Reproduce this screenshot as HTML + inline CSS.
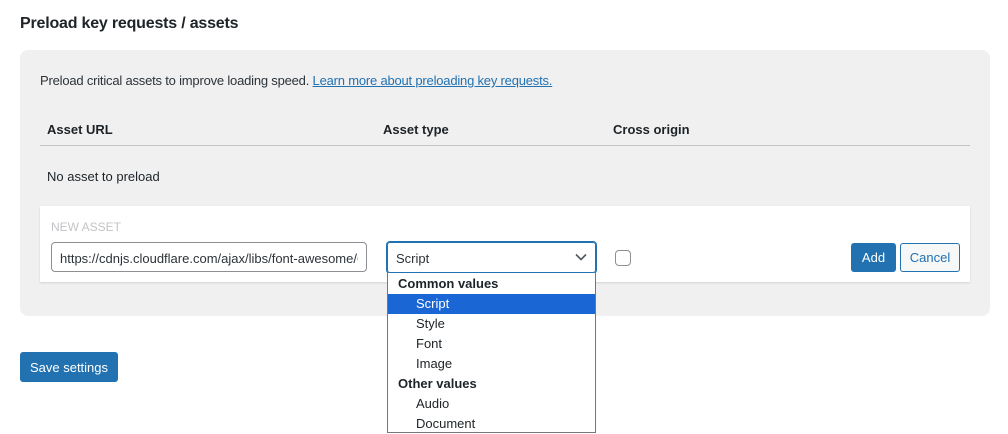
<!DOCTYPE html>
<html><head><style>
*{box-sizing:border-box;margin:0;padding:0}
body{width:1008px;height:428px;overflow:hidden;background:#fff;font-family:"Liberation Sans",sans-serif;color:#1d2327;position:relative;font-size:13px}
.a{position:absolute;white-space:nowrap}
</style></head><body>
<div class="a" style="left:20px;top:15px;font-size:16px;font-weight:600;color:#1d2327;letter-spacing:-0.2px">Preload key requests / assets</div>
<div class="a" style="left:20px;top:50px;width:970px;height:266px;background:#f0f0f1;border-radius:8px"></div>
<div class="a" style="left:40px;top:73px;color:#2c3338;letter-spacing:-0.2px">Preload critical assets to improve loading speed. <span style="color:#2271b1;text-decoration:underline">Learn more about preloading key requests.</span></div>
<div class="a" style="left:47px;top:122px;font-weight:bold">Asset URL</div>
<div class="a" style="left:383px;top:122px;font-weight:bold">Asset type</div>
<div class="a" style="left:613px;top:122px;font-weight:bold">Cross origin</div>
<div class="a" style="left:40px;top:145px;width:930px;height:1px;background:#c3c4c7"></div>
<div class="a" style="left:47px;top:169px">No asset to preload</div>
<div class="a" style="left:40px;top:206px;width:930px;height:76px;background:#fff;box-shadow:0 1px 2px rgba(0,0,0,.12)"></div>
<div class="a" style="left:51px;top:220px;font-size:12px;color:#c3c4c7">NEW ASSET</div>
<div class="a" style="left:51px;top:242px;width:316px;height:30px;border:1px solid #8c8f94;border-radius:4px;padding:8px 8px;color:#2c3338"><div style="width:298px;overflow:hidden">https://cdnjs.cloudflare.com/ajax/libs/font-awesome/6.0.0</div></div>
<div class="a" style="left:387px;top:242px;width:209px;height:31px;border:1px solid #2271b1;box-shadow:0 0 0 1px #2271b1;border-radius:3px;padding:8px 8px;color:#2c3338">Script
<svg style="position:absolute;right:8px;top:10px" width="12" height="8" viewBox="0 0 12 8"><path d="M1 1.5l5 5 5-5" fill="none" stroke="#50575e" stroke-width="1.6"/></svg></div>
<div class="a" style="left:615px;top:250px;width:16px;height:16px;border:1px solid #8c8f94;border-radius:4px"></div>
<div class="a" style="left:851px;top:243px;width:45px;height:29px;background:#2271b1;border-radius:3px;color:#fff;text-align:center;line-height:30px">Add</div>
<div class="a" style="left:900px;top:243px;width:60px;height:29px;background:#f6f7f7;border:1px solid #2271b1;border-radius:3px;color:#2271b1;text-align:center;line-height:28px">Cancel</div>
<div class="a" style="left:387px;top:273px;width:209px;height:160px;background:#fff;border:1px solid #767676;border-top:none;font-size:13px;line-height:20px;color:#1d2327">
<div style="padding-left:10px;font-weight:bold;margin-top:1px">Common values</div>
<div style="padding-left:28px;background:#1a66d4;color:#fff">Script</div>
<div style="padding-left:28px">Style</div>
<div style="padding-left:28px">Font</div>
<div style="padding-left:28px">Image</div>
<div style="padding-left:10px;font-weight:bold">Other values</div>
<div style="padding-left:28px">Audio</div>
<div style="padding-left:28px">Document</div>
</div>
<div class="a" style="left:20px;top:352px;width:98px;height:30px;background:#2271b1;border-radius:3px;color:#fff;text-align:center;line-height:31px">Save settings</div>
</body></html>
